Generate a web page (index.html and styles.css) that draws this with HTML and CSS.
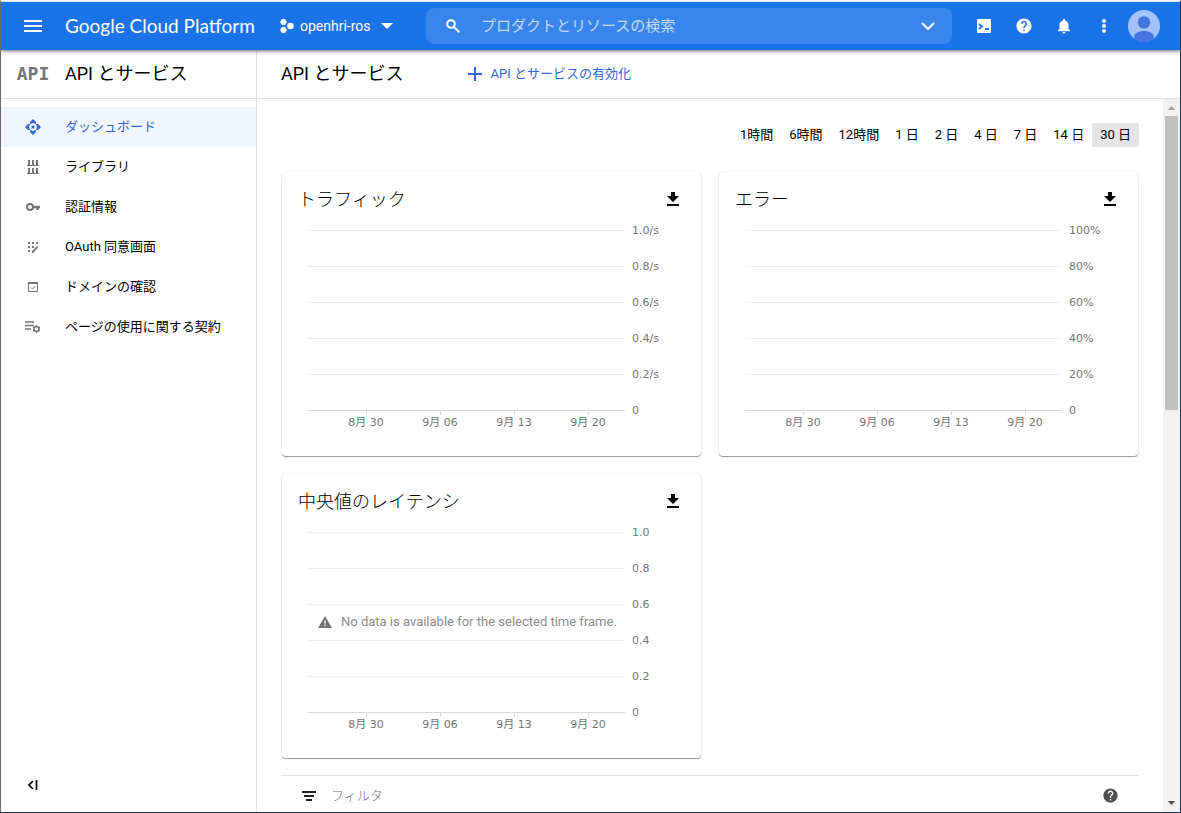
FILE: index.html
```html
<!DOCTYPE html>
<html lang="ja">
<head>
<meta charset="UTF-8">
<meta name="viewport" content="width=device-width, initial-scale=1.0">
<title>API とサービス - Google Cloud Platform</title>
<link rel="stylesheet" href="styles.css">
</head>
<body>

<header class="header">
  <button type="button" class="icon-btn menu-btn" aria-label="メニュー">
    <svg width="18" height="12" viewBox="0 0 18 12" fill="currentColor"><path d="M0 0h18v2H0zM0 5h18v2H0zM0 10h18v2H0z"/></svg>
  </button>
  <a href="#" class="brand">Google Cloud Platform</a>
  <button type="button" class="project">
    <svg width="14" height="14" viewBox="0 0 14 14" fill="currentColor"><path d="M2 0h3l2 3-2 3H2L0 3zM2 8h3l2 3-2 3H2L0 11z"/><circle cx="10.500" cy="7" r="3.300"/></svg>
    <span>openhri-ros</span>
    <svg class="caret" width="12" height="6" viewBox="0 0 12 6" fill="currentColor"><path d="M0 0h12L6 6z"/></svg>
  </button>
  <form class="search">
    <svg width="14" height="14" viewBox="0 0 14 14" fill="none" stroke="currentColor" stroke-width="2"><circle cx="5" cy="5" r="3.800"/><path d="M8 8l5.300 5.300"/></svg>
    <input type="text" aria-label="検索" placeholder="プロダクトとリソースの検索">
    <button type="button" class="search-toggle" aria-label="開く">
      <svg width="14" height="9" viewBox="0 0 14 9" fill="none" stroke="currentColor" stroke-width="2"><path d="M1 1l6 6 6-6"/></svg>
    </button>
  </form>
  <button type="button" class="icon-btn" aria-label="Cloud Shell">
    <svg width="14" height="14" viewBox="0 0 14 14"><rect width="14" height="14" rx="1" fill="currentColor"/><path d="M2 5l3 2.500L2 10M8 10h4" fill="none" stroke="#1a73e8" stroke-width="1.800"/></svg>
  </button>
  <button type="button" class="icon-btn" aria-label="ヘルプ">
    <svg width="18" height="18" viewBox="0 0 24 24" fill="currentColor"><path d="M12 2C6.480 2 2 6.480 2 12s4.480 10 10 10 10-4.480 10-10S17.520 2 12 2zm1 17h-2v-2h2v2zm2.070-7.750l-.9.920C13.450 12.900 13 13.500 13 15h-2v-.5c0-1.100.45-2.100 1.170-2.830l1.240-1.260c.37-.36.59-.86.59-1.410 0-1.100-.9-2-2-2s-2 .9-2 2H8c0-2.210 1.790-4 4-4s4 1.790 4 4c0 .88-.36 1.680-.93 2.250z"/></svg>
  </button>
  <button type="button" class="icon-btn" aria-label="通知">
    <svg width="18" height="18" viewBox="0 0 24 24" fill="currentColor"><path d="M12 22c1.100 0 2-.9 2-2h-4c0 1.100.89 2 2 2zm6-6v-5c0-3.070-1.640-5.640-4.500-6.320V4c0-.83-.67-1.500-1.500-1.500s-1.500.67-1.500 1.500v.68C7.630 5.360 6 7.920 6 11v5l-2 2v1h16v-1l-2-2z"/></svg>
  </button>
  <button type="button" class="icon-btn" aria-label="その他">
    <svg width="4" height="14" viewBox="0 0 4 14" fill="currentColor"><circle cx="2" cy="2" r="2"/><circle cx="2" cy="7" r="2"/><circle cx="2" cy="12" r="2"/></svg>
  </button>
  <button type="button" class="avatar" aria-label="アカウント">
    <svg width="32" height="32" viewBox="0 0 32 32" fill="#4374e0"><circle cx="16" cy="12.500" r="6.200"/><path d="M6 28c0-5 4-7 10-7s10 2 10 7v4H6z"/></svg>
  </button>
</header>

<div class="layout">
  <aside class="sidebar">
    <div class="sidebar-title">
      <span class="api-logo">API</span>
      <h2>API とサービス</h2>
    </div>
    <nav>
      <a href="#" class="nav-item active">
        <svg width="16" height="16" viewBox="0 0 16 16" fill="currentColor"><path d="M8 0l3 3v2L8 4 5 5V3zM8 16l3-3v-2l-3 1-3-1v2zM0 8l3-3h2L4 8l1 3H3zM16 8l-3-3h-2l1 3-1 3h2z"/><circle cx="8" cy="8" r="1.500"/></svg>
        ダッシュボード
      </a>
      <a href="#" class="nav-item">
        <svg width="12" height="14" viewBox="0 0 12 14" fill="currentColor"><path d="M0 5h12v1H0zM1 0h2v5H1zM5 0h2v5H5zM9 0h2v5H9zM0 13h12v1H0zM1 8h2v5H1zM5 8h2v5H5zM9 8h2v5H9z"/></svg>
        ライブラリ
      </a>
      <a href="#" class="nav-item">
        <svg width="14" height="8" viewBox="0 0 14 8" fill="none" stroke="currentColor" stroke-width="2"><circle cx="4" cy="4" r="3"/><path d="M7 4h7M11.500 4v3" stroke-width="2.400"/></svg>
        認証情報
      </a>
      <a href="#" class="nav-item">
        <svg width="12" height="12" viewBox="0 0 12 12" fill="currentColor"><path d="M1 1h2v2H1zM5 1h2v2H5zM9 1h2v2H9zM1 5h2v2H1zM5 5h2v2H5zM1 9h2v2H1zM5 12v-2l5-5 1.200 1.200-5 5.800z"/></svg>
        OAuth 同意画面
      </a>
      <a href="#" class="nav-item">
        <svg width="10" height="10" viewBox="0 0 10 10" fill="none" stroke="currentColor"><path d="M.5.5h9v9h-9z"/><path d="M0 1h10" stroke-width="2"/><path d="M3 5.500l1.500 1.500L7.500 4"/></svg>
        ドメインの確認
      </a>
      <a href="#" class="nav-item">
        <svg width="16" height="12" viewBox="0 0 16 12" fill="none" stroke="currentColor"><path d="M0 1h9M0 4.500h9M0 8h6" stroke-width="1.400"/><circle cx="11.500" cy="8" r="2.500" stroke-width="1.600"/><path d="M11.500 4v1.500M11.500 10.500V12M8 6l1.300.8M13.700 9.200L15 10M8 10l1.300-.8M13.700 6.800L15 6" stroke-width="1.400"/></svg>
        ページの使用に関する契約
      </a>
    </nav>
    <button type="button" class="collapse" aria-label="メニューを閉じる">
      <svg width="10" height="10" viewBox="0 0 10 10" fill="none" stroke="currentColor"><path d="M5 1L1 5l4 4" stroke-width="1.700"/><path d="M8.500 0v10" stroke-width="1.700"/></svg>
    </button>
  </aside>

  <main class="main">
    <div class="toolbar">
      <h1>API とサービス</h1>
      <button type="button" class="enable-btn">
        <svg width="14" height="14" viewBox="0 0 14 14" fill="currentColor"><path d="M6 0h2v6h6v2H8v6H6V8H0V6h6z"/></svg>
        API とサービスの有効化
      </button>
    </div>

    <div class="scroller">
      <div class="content">
        <div class="ranges">
          <button type="button">1時間</button>
          <button type="button">6時間</button>
          <button type="button">12時間</button>
          <button type="button">1 日</button>
          <button type="button">2 日</button>
          <button type="button">4 日</button>
          <button type="button">7 日</button>
          <button type="button">14 日</button>
          <button type="button" class="selected">30 日</button>
        </div>

        <div class="cards">
          <section class="card">
            <div class="card-head">
              <h3>トラフィック</h3>
              <button type="button" class="download" aria-label="ダウンロード"><svg width="12" height="14" viewBox="0 0 12 14" fill="currentColor"><path d="M4 0h4v4h4l-6 6-6-6h4zM0 12h12v2H0z"/></svg></button>
            </div>
            <div class="chart">
              <div class="line"><span>1.0/s</span></div>
              <div class="line"><span>0.8/s</span></div>
              <div class="line"><span>0.6/s</span></div>
              <div class="line"><span>0.4/s</span></div>
              <div class="line"><span>0.2/s</span></div>
              <div class="line base"><span>0</span></div>
              <div class="dates"><span>8月 30</span><span>9月 06</span><span>9月 13</span><span>9月 20</span></div>
            </div>
          </section>

          <section class="card">
            <div class="card-head">
              <h3>エラー</h3>
              <button type="button" class="download" aria-label="ダウンロード"><svg width="12" height="14" viewBox="0 0 12 14" fill="currentColor"><path d="M4 0h4v4h4l-6 6-6-6h4zM0 12h12v2H0z"/></svg></button>
            </div>
            <div class="chart">
              <div class="line"><span>100%</span></div>
              <div class="line"><span>80%</span></div>
              <div class="line"><span>60%</span></div>
              <div class="line"><span>40%</span></div>
              <div class="line"><span>20%</span></div>
              <div class="line base"><span>0</span></div>
              <div class="dates"><span>8月 30</span><span>9月 06</span><span>9月 13</span><span>9月 20</span></div>
            </div>
          </section>

          <section class="card">
            <div class="card-head">
              <h3>中央値のレイテンシ</h3>
              <button type="button" class="download" aria-label="ダウンロード"><svg width="12" height="14" viewBox="0 0 12 14" fill="currentColor"><path d="M4 0h4v4h4l-6 6-6-6h4zM0 12h12v2H0z"/></svg></button>
            </div>
            <div class="chart">
              <div class="line"><span>1.0</span></div>
              <div class="line"><span>0.8</span></div>
              <div class="line"><span>0.6</span></div>
              <div class="line"><span>0.4</span></div>
              <div class="line"><span>0.2</span></div>
              <div class="line base"><span>0</span></div>
              <div class="dates"><span>8月 30</span><span>9月 06</span><span>9月 13</span><span>9月 20</span></div>
              <!-- message over the empty chart -->
              <p class="no-data">
                <svg width="14" height="12" viewBox="0 0 14 12"><path d="M7 0l7 12H0z" fill="#757575"/><path d="M6.300 4.500h1.400v3H6.300zM6.300 8.500h1.400V10H6.300z" fill="#fff"/></svg>
                No data is available for the selected time frame.
              </p>
            </div>
          </section>
        </div>

        <div class="filter">
          <svg width="14" height="10" viewBox="0 0 14 10" fill="#202124"><path d="M0 0h14v2H0zM2 4h10v2H2zM4 8h6v2H4z"/></svg>
          <input type="text" aria-label="フィルタ" placeholder="フィルタ">
          <button type="button" class="filter-help" aria-label="ヘルプ">
            <svg width="17" height="17" viewBox="0 0 24 24" fill="currentColor"><path d="M12 2C6.480 2 2 6.480 2 12s4.480 10 10 10 10-4.480 10-10S17.520 2 12 2zm1 17h-2v-2h2v2zm2.070-7.750l-.9.920C13.450 12.900 13 13.500 13 15h-2v-.5c0-1.100.45-2.100 1.170-2.830l1.240-1.260c.37-.36.59-.86.59-1.410 0-1.100-.9-2-2-2s-2 .9-2 2H8c0-2.210 1.790-4 4-4s4 1.790 4 4c0 .88-.36 1.680-.93 2.250z"/></svg>
          </button>
        </div>
      </div>

      <div class="scrollbar">
        <svg width="7" height="4" viewBox="0 0 7 4" fill="#a3a3a3"><path d="M3.500 0L7 4H0z"/></svg>
        <div class="thumb"></div>
        <svg width="7" height="4" viewBox="0 0 7 4" fill="#505050"><path d="M3.500 4L7 0H0z"/></svg>
      </div>
    </div>
  </main>
</div>

</body>
</html>
```
FILE: styles.css
```css
* {
  box-sizing: border-box;
}
body {
  margin: 0;
  height: 100vh;
  display: flex;
  flex-direction: column;
  overflow: hidden;
  border: 1px solid #1b3a55;
  border-top: 1px solid #fff;
  border-left-color: #6b6b6b;
  background: #fff;
  color: #000;
  font-family: Roboto, "Noto Sans CJK JP", sans-serif;
  font-size: 13px;
  line-height: 20px;
}
h1, h2, h3, p {
  margin: 0;
  font-weight: 400;
}
h1, h2, h3 {
  font-size: 18px;
  line-height: 24px;
}
h3 {
  font-weight: 300;
}
a {
  text-decoration: none;
}
button, input {
  border: none;
  padding: 0;
  background: none;
  color: inherit;
  font: inherit;
}
button {
  cursor: pointer;
}
svg {
  display: block;
  flex-shrink: 0;
}

/* header */
.header {
  position: relative;
  z-index: 1;
  display: flex;
  align-items: center;
  height: 49px;
  flex-shrink: 0;
  padding-right: 20px;
  border-top: 1px solid #dadce0;
  background: #1a73e8;
  color: #fff;
  box-shadow: 0 1px 4px rgba(0,0,0,0.6);
}
.icon-btn {
  display: flex;
  align-items: center;
  justify-content: center;
  width: 40px;
  height: 40px;
}
.menu-btn {
  width: 64px;
}
.brand {
  width: 215px;
  color: #fff;
  font-family: Lato, sans-serif;
  font-size: 19px;
  line-height: 24px;
  white-space: nowrap;
}
.project {
  display: flex;
  align-items: center;
  gap: 6px;
  width: 146px;
  font-size: 14px;
}
.caret {
  margin-left: 4px;
}
.search {
  flex: 1;
  display: flex;
  align-items: center;
  height: 36px;
  margin-right: 12px;
  padding: 0 17px 0 20px;
  border-radius: 8px;
  background: #3885ec;
}
.search input {
  flex: 1;
  min-width: 0;
  margin-left: 21px;
  font-size: 15px;
}
.search input::placeholder {
  color: #c6dbf9;
}
.avatar {
  width: 32px;
  height: 32px;
  margin-left: 4px;
  border-radius: 50%;
  background: #a1c2fa;
  overflow: hidden;
}

/* sidebar */
.layout {
  flex: 1;
  display: flex;
  min-height: 0;
}
.sidebar {
  display: flex;
  flex-direction: column;
  width: 256px;
  flex-shrink: 0;
  border-right: 1px solid #e0e0e0;
}
.sidebar-title {
  display: flex;
  align-items: center;
  height: 49px;
  border-bottom: 1px solid #e0e0e0;
}
.api-logo {
  width: 64px;
  text-align: center;
  color: #757575;
  font-family: "DejaVu Sans Mono", monospace;
  font-size: 18px;
  font-weight: 700;
}
.sidebar nav {
  flex: 1;
  padding-top: 8px;
}
.nav-item {
  display: grid;
  grid-template-columns: 64px 1fr;
  align-items: center;
  height: 40px;
  color: #000;
}
.nav-item svg {
  justify-self: center;
  color: #757575;
}
.nav-item.active, .nav-item.active svg {
  color: #3367d6;
}
.nav-item.active {
  background: #f0f5ff;
}
.collapse {
  display: flex;
  align-items: center;
  justify-content: center;
  width: 64px;
  height: 54px;
}

/* main */
.main {
  flex: 1;
  display: flex;
  flex-direction: column;
  min-width: 0;
}
.toolbar {
  display: flex;
  align-items: center;
  gap: 65px;
  height: 49px;
  flex-shrink: 0;
  padding-left: 24px;
  border-bottom: 1px solid #e0e0e0;
}
.enable-btn {
  display: flex;
  align-items: center;
  gap: 8px;
  color: #3367d6;
}
.scroller {
  flex: 1;
  display: flex;
  min-height: 0;
}
.content {
  flex: 1;
  min-width: 0;
  padding: 24px 24px 0;
  overflow: hidden;
}
.ranges {
  display: flex;
  justify-content: flex-end;
}
.ranges button {
  height: 24px;
  padding: 0 8px;
}
.ranges .selected {
  border-radius: 2px;
  background: #e4e4e4;
}
.cards {
  display: grid;
  grid-template-columns: 1fr 1fr;
  gap: 18px;
  margin: 25px 1px 17px;
}
.card {
  height: 284px;
  padding: 15px 17px 15px 16px;
  border-radius: 4px;
  box-shadow: 0 1px 1px rgba(0,0,0,0.4), 0 0 2px rgba(0,0,0,0.12);
}
.card-head {
  display: flex;
  align-items: center;
  justify-content: space-between;
}
.card-head h3 {
  padding-top: 2px;
  line-height: 22px;
}
.download {
  padding: 0 5px;
}

/* charts */
.chart {
  position: relative;
  padding: 1px 17px 0 10px;
  color: #757575;
  font-family: "DejaVu Sans", "Noto Sans CJK JP", sans-serif;
  font-size: 11px;
}
.line {
  display: flex;
  align-items: center;
  gap: 7px;
  height: 36px;
}
.line::before {
  content: "";
  flex: 1;
  height: 1px;
  background: #eee;
}
.line.base::before {
  background: #dadada;
}
.line span {
  width: 35px;
  padding-top: 2px;
}
.dates {
  display: grid;
  grid-template-columns: repeat(4, 1fr);
  margin-top: -18px;
  padding: 0 42px 0 21px;
  text-align: center;
  line-height: 16px;
}
.dates span::before {
  content: "";
  display: block;
  width: 1px;
  height: 5px;
  margin: 0 auto;
  background: #dadada;
}
.no-data {
  position: absolute;
  top: 99px;
  left: 20px;
  display: flex;
  align-items: center;
  gap: 9px;
  color: #8c8c8c;
  font-family: Roboto, sans-serif;
  font-size: 13px;
}

/* filter */
.filter {
  display: flex;
  align-items: center;
  height: 40px;
  padding: 0 20px 0 21px;
  border-top: 1px solid #e0e0e0;
}
.filter input {
  flex: 1;
  margin-left: 15px;
}
.filter input::placeholder {
  color: #757575;
  font-weight: 300;
}
.filter-help {
  color: #505050;
}

.scrollbar {
  display: flex;
  flex-direction: column;
  align-items: center;
  width: 17px;
  padding: 7px 0;
  background: #f1f1f1;
}
.thumb {
  width: 13px;
  height: 42%;
  margin: 6px 0 auto;
  background: #c1c1c1;
}
```
